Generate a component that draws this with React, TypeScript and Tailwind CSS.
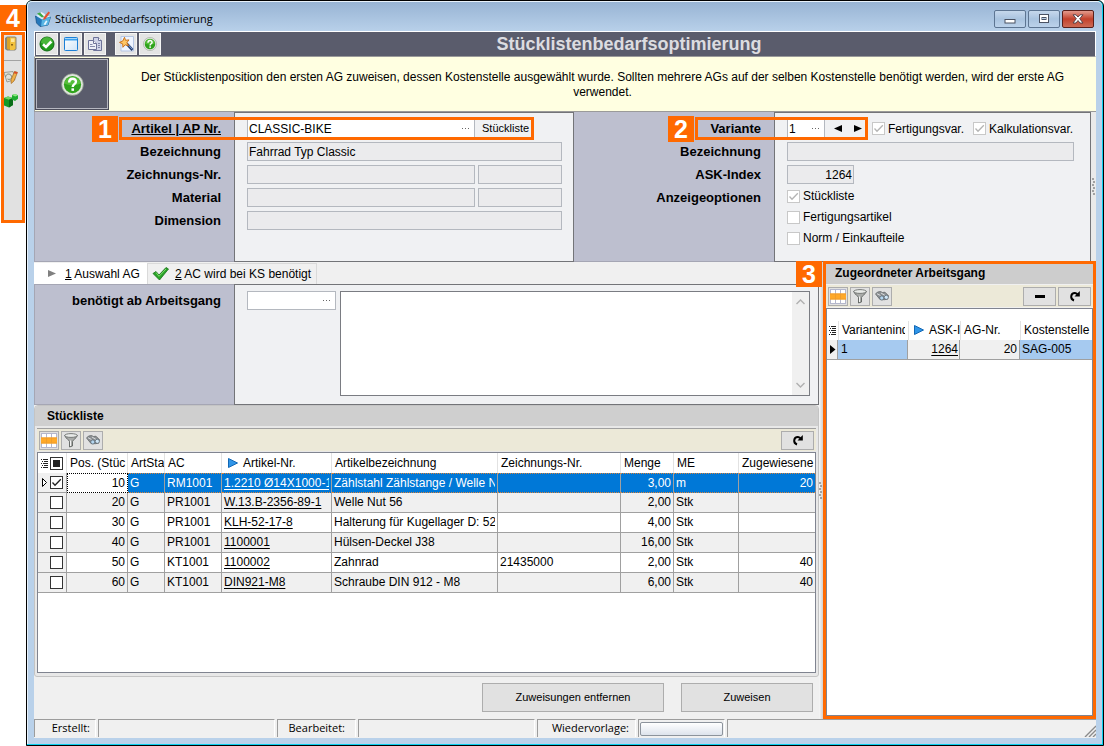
import React from "react";
import clsx from "clsx";

const fieldCls =
  "block h-[19px] min-w-0 border border-[#b4b8bf] bg-[#ebebed] px-px text-[12px] leading-[17px] text-black outline-none";

function Badge({ n, className }: { n: number; className: string }) {
  return (
    <span
      className={clsx(
        "absolute z-20 flex h-[26px] w-[26px] items-center justify-center bg-[#ff6900] text-[25px] leading-none font-bold text-white",
        className,
      )}
    >
      {n}
    </span>
  );
}

function Frame({ className }: { className: string }) {
  return <span className={clsx("pointer-events-none absolute z-10 border-3 border-[#ff6900]", className)} />;
}

function CheckBox({
  label,
  checked,
  dark,
  mixed,
  hideLabel,
}: {
  label: string;
  checked?: boolean;
  dark?: boolean;
  mixed?: boolean;
  hideLabel?: boolean;
}) {
  return (
    <label className="flex items-center gap-[3px] whitespace-nowrap">
      <span className="relative block h-[13px] w-[13px] shrink-0">
        <input
          type="checkbox"
          defaultChecked={checked}
          aria-label={hideLabel ? label : undefined}
          className={clsx(
            "block h-[13px] w-[13px] appearance-none border bg-white",
            dark ? "border-[#333]" : "border-[#c8c8c8]",
          )}
        />
        {checked && (
          <svg viewBox="0 0 13 13" className="pointer-events-none absolute inset-0 h-[13px] w-[13px]">
            <path d="M2.5 6.5 5 9.2 10.8 3.2" fill="none" stroke={dark ? "#222" : "#b4b4b4"} strokeWidth="1.3" />
          </svg>
        )}
        {mixed && <span className="pointer-events-none absolute inset-[3px] bg-[#222]" />}
      </span>
      {!hideLabel && <span>{label}</span>}
    </label>
  );
}

function HelpIcon({ size }: { size: number }) {
  return (
    <svg width={size} height={size} viewBox="0 0 24 24">
      <circle cx="12" cy="12" r="11.3" fill="#dfe5dc" stroke="#8c968a" strokeWidth="0.8" />
      <circle cx="12" cy="12" r="9" fill="#2fa31c" />
      <path d="M3.6 11a8.5 8.5 0 0 1 16.8 0c-5 2.500-11.800 2.500-16.800 0z" fill="#6fd04e" opacity="0.6" />
      <path d="M8.500 10c0-5.400 7.300-5 7.100-.8-.1 2.500-3.400 2.400-3.400 5.300" fill="none" stroke="#fff" strokeWidth="2.500" />
      <rect x="10.900" y="16" width="2.700" height="2.600" fill="#fff" />
    </svg>
  );
}

function OkIcon() {
  return (
    <svg width="16" height="16" viewBox="0 0 16 16">
      <circle cx="8" cy="8" r="7" fill="#1f9a1b" stroke="#0f6b12" />
      <path d="M2 7a6 6 0 0 1 12 0c-4 1.500-8 1.500-12 0z" fill="#63c94f" opacity="0.6" />
      <path d="M4 8.200 7 11l5.300-5.500" fill="none" stroke="#fff" strokeWidth="2.600" />
    </svg>
  );
}

function WindowIcon() {
  return (
    <svg width="16" height="16" viewBox="0 0 16 16">
      <defs>
        <linearGradient id="winFill" x1="0" y1="0" x2="1" y2="1">
          <stop offset="0" stopColor="#fff" />
          <stop offset="1" stopColor="#cfe4f8" />
        </linearGradient>
      </defs>
      <rect x="1.500" y="1.500" width="13" height="13" rx="0.800" fill="url(#winFill)" stroke="#1c7fd6" />
      <path d="M2 3.500h12" stroke="#3aa0ee" strokeWidth="2" />
      <path d="M2 2.500h12" stroke="#a5d8fb" />
    </svg>
  );
}

function CopyIcon() {
  return (
    <svg width="16" height="16" viewBox="0 0 16 16" fill="#cfd3e8" stroke="#6d7299">
      <path d="M6.500 1.500h5l3 3v10h-8z" />
      <path d="M11.500 1.500v3h3" fill="#fff" />
      <path d="M1.500 4.500h5l3 3v6h-8z" fill="#eef0f8" />
      <path d="M6.500 4.500v3h3" fill="#fff" />
      <path d="M3 8.500h2.500M3 10.500h5M11 7.500h2M11 9.500h2M11 11.500h2" strokeWidth="0.800" />
    </svg>
  );
}

function WandIcon() {
  return (
    <svg width="16" height="16" viewBox="0 0 16 16">
      <path d="M3 .5h12.500V15H3z" fill="#eef4ff" stroke="#b5c6e4" />
      <path d="m8.500 7.500 6 6.500" stroke="#28406f" strokeWidth="2.600" />
      <path d="m10 8.600 4.300 4.600" stroke="#7fa2dc" />
      <path d="m6.500 1.300 1 3 3.500-.4-2.100 2.700 1.600 3.100-3.300-.9-2.300 2.500-.2-3.400L1.500 6.400l3.200-1.300z" fill="#ffc766" stroke="#c66a10" strokeWidth="0.900" />
    </svg>
  );
}

function AppIcon() {
  return (
    <svg width="16" height="16" viewBox="0 0 16 16">
      <path d="M.500 5 10 3.500 15.500 6l-2.500 8-8 1.500L1.500 12z" fill="#2578bb" stroke="#124b80" strokeWidth="0.700" />
      <path d="m.5 4.500 8-2 7 3-8.500 3z" fill="#d5edf8" />
      <path d="M7 8.500 15.500 6l-2.500 8-7 1.300z" fill="#57b4e4" />
      <path d="m2 2.500 3-1 4 4-2 1z" fill="#3faa45" />
      <path d="m13.500.500 1.500 1.300L10.500 8l-2.300 1 .4-2.500z" fill="#e4512e" />
      <path d="m6.500 1 3.500 2.500-1 1.300L5.500 2z" fill="#f0f4f8" />
      <path d="M8.500 13.500 11 9.500l1.500.5-2 4z" fill="#e8f6ff" />
    </svg>
  );
}

function GridIcon() {
  return (
    <svg width="16" height="15" viewBox="0 0 16 15">
      <rect width="16" height="15" fill="#fff" />
      <path d="M0 .5h16M0 14.500h16M.5 0v15M5.500 0v15M10.500 0v15M15.500 0v15" stroke="#b4b7cc" />
      <rect y="4.500" width="16" height="6" fill="#ffa928" />
      <path d="M0 5h16M0 10h16M5.500 5v5M10.500 5v5" stroke="#ef9d2c" />
    </svg>
  );
}

function FunnelIcon() {
  return (
    <svg width="14" height="15" viewBox="0 0 14 15">
      <path d="M.7 2.500C2 6 5.300 7 5.500 8.500V14l3-1V8.500C9 6.500 12.500 5.500 13.300 2.500z" fill="#a9aba9" stroke="#5f6361" strokeWidth="0.900" />
      <ellipse cx="7" cy="2.500" rx="6.300" ry="1.900" fill="#e8eae8" stroke="#6d706e" strokeWidth="0.900" />
      <path d="M6.500 7.500v5.500" stroke="#f3f3f3" />
    </svg>
  );
}

function BinocularsIcon() {
  return (
    <svg width="14" height="12" viewBox="0 0 14 12">
      <path d="M.5 4 2.500 2l3-.5 2 1 2.500-.3 3.500 3.500-1 3.500-3 .5L5 9.500z" fill="#8d9194" stroke="#5a5e60" strokeWidth="0.700" />
      <path d="m2 3.700 3.500 1.800M6 3l4 2.500" stroke="#dadddf" />
      <circle cx="6.800" cy="8" r="2.100" fill="#b4d6f0" stroke="#55606a" strokeWidth="0.700" />
      <circle cx="11.300" cy="7.300" r="2.100" fill="#cfe6f7" stroke="#55606a" strokeWidth="0.700" />
    </svg>
  );
}

function RefreshIcon() {
  return (
    <svg width="12" height="12" viewBox="0 0 12 12">
      <path d="M5 10.500C.8 9 1.500 2.800 6 2.900c1.300.1 2.200.7 2.900 1.800" fill="none" stroke="#000" strokeWidth="2" />
      <path d="M10.800 1v5.500H5.500z" fill="#000" />
    </svg>
  );
}

function BlueArrow() {
  return (
    <svg width="10" height="10" viewBox="0 0 10 10" className="shrink-0">
      <path d="M.5.5 9.500 5 .5 9.500z" fill="#2f95e8" stroke="#1267b4" />
    </svg>
  );
}

function ListGlyph() {
  return (
    <svg width="7" height="9" viewBox="0 0 7 9" className="shrink-0">
      <path d="M0 .5h1M2 .5h5M1 2.500h1M3 2.500h4M0 4.500h1M2 4.500h5M1 6.500h1M3 6.500h4M0 8.500h1M2 8.500h5" stroke="#222" />
    </svg>
  );
}

function Grip() {
  return (
    <svg width="4" height="18" viewBox="0 0 4 18" className="shrink-0">
      <path d="M0 1h2M1 4h2M0 7h2M1 10h2M0 13h2M1 16h2" stroke="#8a8a8a" strokeWidth="1.500" />
    </svg>
  );
}

function ToolButton({ label, children }: { label: string; children: React.ReactNode }) {
  return (
    <button
      type="button"
      aria-label={label}
      className="flex h-[22px] w-[22px] items-center justify-center border border-[#f5f5f5] bg-[#e4e4e4]"
    >
      {children}
    </button>
  );
}

function SmallButton({ label, wide, children }: { label: string; wide?: boolean; children: React.ReactNode }) {
  return (
    <button
      type="button"
      aria-label={label}
      className={clsx(
        "flex h-[19px] items-center justify-center border border-[#adadad] bg-[#e1e1e1]",
        wide ? "w-[33px]" : "w-[20px]",
      )}
    >
      {children}
    </button>
  );
}

function GridTools({ minus }: { minus?: boolean }) {
  return (
    <div className="flex h-[22px] items-center gap-[2px] bg-[#ece9d8] px-[2px]">
      <SmallButton label="Spalten">
        <GridIcon />
      </SmallButton>
      <SmallButton label="Filter">
        <FunnelIcon />
      </SmallButton>
      <SmallButton label="Suchen">
        <BinocularsIcon />
      </SmallButton>
      <span className="flex-1" />
      {minus && (
        <SmallButton label="Entfernen" wide>
          <span className="h-[3px] w-[10px] bg-black" />
        </SmallButton>
      )}
      <SmallButton label="Aktualisieren" wide>
        <RefreshIcon />
      </SmallButton>
    </div>
  );
}

function Combo({ id, value, className }: { id: string; value: string; className: string }) {
  return (
    <span className={clsx("flex h-[19px] items-center border border-[#b4b8bf] bg-white", className)}>
      <input id={id} defaultValue={value} className="h-[17px] w-0 min-w-0 flex-1 bg-transparent px-px text-[12px] outline-none" />
      <button type="button" aria-label="Auswählen" className="flex h-full w-[17px] items-center justify-center">
        <svg width="8" height="2" viewBox="0 0 8 2">
          <path d="M0 .5h1M3 .5h1M6 .5h1" stroke="#666" />
        </svg>
      </button>
    </span>
  );
}

function FormLabel({ htmlFor, underline, children }: { htmlFor: string; underline?: boolean; children: React.ReactNode }) {
  return (
    <label htmlFor={htmlFor} className={clsx("h-[19px] text-[13px] leading-[19px] font-bold", underline && "underline")}>
      {children}
    </label>
  );
}

function TitleBar() {
  const btn =
    "flex h-[18px] w-[32px] items-center justify-center rounded-[2px] border border-[#5d7592] bg-linear-to-b from-[#c6d8ec] via-[#a9c3df] to-[#bcd2ea]";
  return (
    <div className="flex h-[29px] items-center gap-[4px] pt-[5px] pl-px">
      <AppIcon />
      <span className="flex-1 font-['Open_Sans','Noto_Sans',sans-serif] text-[11px]">Stücklistenbedarfsoptimierung</span>
      <div className="flex gap-[2px] pr-[2px]">
        <button type="button" aria-label="Minimieren" className={btn}>
          <svg width="12" height="10" viewBox="0 0 12 10">
            <rect x="1" y="5.500" width="10" height="3.500" fill="#fff" stroke="#4a5263" />
          </svg>
        </button>
        <button type="button" aria-label="Maximieren" className={btn}>
          <svg width="12" height="10" viewBox="0 0 12 10">
            <rect x="1.500" y=".5" width="9" height="8" fill="#fff" stroke="#4a5263" />
            <rect x="4" y="3.500" width="4" height="2" fill="#b8cde4" stroke="#4a5263" />
          </svg>
        </button>
        <button
          type="button"
          aria-label="Schließen"
          className="flex h-[18px] w-[32px] items-center justify-center rounded-[2px] border border-[#5a1f1a] bg-linear-to-b from-[#e39a8d] via-[#c2402b] to-[#cd6a55]"
        >
          <svg width="12" height="10" viewBox="0 0 12 10">
            <path d="M1 .8h3L6 3 8 .8h3L7.700 4.700 11 9H8L6 6.500 4 9H1l3.300-4.300z" fill="#fff" stroke="#4a3a44" strokeWidth="0.900" />
          </svg>
        </button>
      </div>
    </div>
  );
}

function SideTools() {
  return (
    <aside className="relative w-[26px] shrink-0 pt-[32px] pl-px">
      <Badge n={4} className="top-[5px] left-0" />
      <div className="flex h-[191px] w-[24px] flex-col items-start border-3 border-[#ff6900] bg-[#e1e1e1]">
        <button type="button" aria-label="Ablage" className="mt-px block h-[16px]">
          <svg width="14" height="16" viewBox="0 0 14 16">
            <path d="m1 2 2-1.500h8l1.500 1V13L11 14.500H3L1 13z" fill="#8a8372" />
            <path d="M3 1.500h4v12H4l-1-1z" fill="#d9a328" />
            <path d="M6 1.500h5.500v11L10 14H6z" fill="#f3c23c" />
            <path d="M7 2.500h3.500v3.500H7z" fill="#ffe79a" />
            <path d="M7 8h2v1.500H7z" fill="#8a6414" />
          </svg>
        </button>
        <span className="mt-[8px] h-px w-[17px] bg-[#a3a3a3]" />
        <button type="button" aria-label="Bearbeiten" className="mt-[8px] block h-[16px]">
          <svg width="15" height="16" viewBox="0 0 15 16">
            <path d="M0 3.500 9 2.500l2 8L3 13z" fill="#dfe0da" stroke="#8b8b84" strokeWidth="0.800" />
            <path d="M1.500 8C2 4.500 6 4 7.500 7S5 11 3.500 10" fill="none" stroke="#7f8c7c" />
            <path d="m10.500 2.500 3 .8L10 12l-2.800 2.500-.2-3.700z" fill="#f0b24a" stroke="#a3651c" strokeWidth="0.700" />
            <path d="m10.500 2.500 3 .8-.7 1.800-3-.8z" fill="#d84a2b" />
          </svg>
        </button>
        <button type="button" aria-label="Artikel" className="mt-[8px] block h-[16px]">
          <svg width="15" height="16" viewBox="0 0 15 16">
            <path d="m0 5 4-1.500L9 5v7l-4 2.500-5-2z" fill="#169a26" />
            <path d="m0 5 4-1.500L9 5 5 6.700z" fill="#6ed565" />
            <path d="M5 6.700 9 5v7l-4 2.500z" fill="#0a6d17" />
            <path d="m8 2 3-1 3 1.200v3.500L11 8 8 6.500z" fill="#1fae30" />
            <path d="m8 2 3-1 3 1.200-2.800 1.200z" fill="#90ea83" />
          </svg>
        </button>
      </div>
    </aside>
  );
}

function ArticleForm() {
  return (
    <section className="grid h-[150px] grid-cols-[200px_minmax(0,340fr)_200px_minmax(0,317fr)_5px] bg-[#bdbfcf] text-[12px]">
      <div className="flex flex-col items-end gap-[4px] border-b border-l border-[#a5a6b4] pt-[7px] pr-[13px]">
        <FormLabel htmlFor="artikel" underline>
          Artikel | AP Nr.
        </FormLabel>
        <FormLabel htmlFor="bez">Bezeichnung</FormLabel>
        <FormLabel htmlFor="znr">Zeichnungs-Nr.</FormLabel>
        <FormLabel htmlFor="material">Material</FormLabel>
        <FormLabel htmlFor="dim">Dimension</FormLabel>
      </div>
      <div className="relative border border-[#737478] bg-[#f0f1f3] pt-[6px] pr-[11px] pl-[12px]">
        <Badge n={1} className="top-[3px] left-[-143px]" />
        <Frame className="top-[4px] right-[39px] left-[-116px] h-[23px]" />
        <div className="grid grid-cols-[minmax(0,228fr)_minmax(0,84fr)] gap-x-[3px] gap-y-[4px]">
          <Combo id="artikel" value="CLASSIC-BIKE" className="w-full" />
          <button type="button" className="h-[19px] pl-[4px] text-left text-[11px]">
            Stückliste
          </button>
          <input id="bez" readOnly value="Fahrrad Typ Classic" className={clsx(fieldCls, "col-span-2")} />
          <input id="znr" readOnly className={fieldCls} />
          <input aria-label="Zeichnungs-Nr. Zusatz" readOnly className={fieldCls} />
          <input id="material" readOnly className={fieldCls} />
          <input aria-label="Material Zusatz" readOnly className={fieldCls} />
          <input id="dim" readOnly className={clsx(fieldCls, "col-span-2")} />
        </div>
      </div>
      <div className="flex flex-col items-end gap-[4px] border-b border-[#a5a6b4] pt-[7px] pr-[13px]">
        <FormLabel htmlFor="variante">Variante</FormLabel>
        <FormLabel htmlFor="vbez">Bezeichnung</FormLabel>
        <FormLabel htmlFor="ask">ASK-Index</FormLabel>
        <span className="text-[13px] leading-[19px] font-bold">Anzeigeoptionen</span>
      </div>
      <div className="relative border border-[#737478] bg-[#f0f1f3] pt-[6px] pl-[12px]">
        <Badge n={2} className="top-[3px] left-[-107px]" />
        <Frame className="top-[4px] left-[-80px] h-[23px] w-[173px]" />
        <div className="flex flex-col gap-[4px]">
          <div className="flex items-center">
            <Combo id="variante" value="1" className="w-[38px] shrink-0" />
            <button type="button" aria-label="Zurück" className="flex h-[19px] w-[26px] items-center justify-center">
              <svg width="8" height="7" viewBox="0 0 8 7">
                <path d="M8 0v7L0 3.500z" />
              </svg>
            </button>
            <button type="button" aria-label="Weiter" className="mr-[8px] flex h-[19px] w-[13px] items-center justify-center">
              <svg width="8" height="7" viewBox="0 0 8 7">
                <path d="M0 0v7l8-3.500z" />
              </svg>
            </button>
            <div className="flex gap-[9px]">
              <CheckBox label="Fertigungsvar." checked />
              <CheckBox label="Kalkulationsvar." checked />
            </div>
          </div>
          <input id="vbez" readOnly className={clsx(fieldCls, "mr-[16px]")} />
          <input id="ask" readOnly value="1264" className={clsx(fieldCls, "w-[67px] text-right")} />
          <div className="flex flex-col gap-[7px] pt-px leading-[14px]">
            <CheckBox label="Stückliste" checked />
            <CheckBox label="Fertigungsartikel" />
            <CheckBox label="Norm / Einkaufteile" />
          </div>
        </div>
      </div>
      <div className="flex items-center justify-center bg-[#eaeaea]">
        <Grip />
      </div>
    </section>
  );
}

function Tabs() {
  return (
    <div role="tablist" className="flex h-[22px] items-end bg-[#f0f0f0] text-[12px]">
      <button role="tab" aria-selected="true" type="button" className="flex h-[21px] w-[113px] items-center bg-white pl-[14px]">
        <svg width="8" height="7" viewBox="0 0 8 7">
          <path d="M0 0v7l8-3.500z" fill="#808080" />
        </svg>
        <span className="pl-[9px]">
          <u>1</u> Auswahl AG
        </span>
      </button>
      <button role="tab" aria-selected="false" type="button" className="flex h-[21px] w-[170px] items-center border border-b-0 border-[#dadada] pl-[4px]">
        <svg width="17" height="14" viewBox="0 0 17 14">
          <path d="M1 6.500 4 4.500 7 8l7-7.500L16.500 2 7.500 13z" fill="#28a428" stroke="#167016" strokeWidth="0.800" />
          <path d="m4 5.500 3 3.800L14 2" fill="none" stroke="#7fdc6b" />
        </svg>
        <span className="pl-[6px] whitespace-nowrap">
          <u>2</u> AC wird bei KS benötigt
        </span>
      </button>
    </div>
  );
}

function OperationForm() {
  return (
    <section className="grid h-[121px] shrink-0 grid-cols-[200px_minmax(0,1fr)] bg-[#bdbfcf]">
      <div className="flex flex-col items-end border border-r-0 border-[#a5a6b4] pt-[6px] pr-[13px]">
        <FormLabel htmlFor="abag">benötigt ab Arbeitsgang</FormLabel>
      </div>
      <div className="flex gap-[4px] border border-[#737478] bg-[#f0f1f3] pt-[6px] pr-[8px] pb-[8px] pl-[12px]">
        <Combo id="abag" value="" className="w-[89px] shrink-0" />
        <div className="flex flex-1 border border-[#7a7c82] bg-white">
          <textarea aria-label="Beschreibung" className="min-w-0 flex-1 resize-none text-[12px] outline-none" />
          <div className="flex w-[17px] flex-col items-center justify-between bg-[#f0f0f0] py-[7px]">
            <svg width="9" height="6" viewBox="0 0 9 6">
              <path d="m.5 5 4-4 4 4" fill="none" stroke="#b0b0b0" strokeWidth="1.400" />
            </svg>
            <svg width="9" height="6" viewBox="0 0 9 6">
              <path d="m.5 1 4 4 4-4" fill="none" stroke="#b0b0b0" strokeWidth="1.400" />
            </svg>
          </div>
        </div>
      </div>
    </section>
  );
}

const rows = [
  ["10", "G", "RM1001", "1.2210 Ø14X1000-1", "Zählstahl Zählstange / Welle N", "", "3,00", "m", "20"],
  ["20", "G", "PR1001", "W.13.B-2356-89-1", "Welle Nut 56", "", "2,00", "Stk", ""],
  ["30", "G", "PR1001", "KLH-52-17-8", "Halterung für Kugellager D: 52", "", "4,00", "Stk", ""],
  ["40", "G", "PR1001", "1100001", "Hülsen-Deckel J38", "", "16,00", "Stk", ""],
  ["50", "G", "KT1001", "1100002", "Zahnrad", "21435000", "2,00", "Stk", "40"],
  ["60", "G", "KT1001", "DIN921-M8", "Schraube DIN 912 - M8", "", "6,00", "Stk", "40"],
];

const heads = ["Pos. (Stüc", "ArtSta", "AC", "Artikel-Nr.", "Artikelbezeichnung", "Zeichnungs-Nr.", "Menge", "ME", "Zugewiesene"];

function PartsTable() {
  return (
    <table className="w-full table-fixed border-separate border-spacing-0 text-[12px] leading-[19px]">
      <colgroup>
        <col className="w-[29px]" />
        <col className="w-[61px]" />
        <col className="w-[37px]" />
        <col className="w-[57px]" />
        <col className="w-[110px]" />
        <col className="w-[166px]" />
        <col className="w-[123px]" />
        <col className="w-[53px]" />
        <col className="w-[65px]" />
        <col />
      </colgroup>
      <thead>
        <tr className="h-[20px]">
          <th className="border-r border-[#e2e2e2] p-0">
            <div className="flex items-center gap-[2px] pl-[3px]">
              <ListGlyph />
              <CheckBox label="Alle auswählen" dark mixed hideLabel />
            </div>
          </th>
          {heads.map((h, i) => (
            <th key={h} className={clsx("p-0 text-left font-normal", i < 8 && "border-r border-[#e2e2e2]")}>
              <div className="flex items-center overflow-hidden pl-[3px] whitespace-nowrap">
                {i === 3 && (
                  <span className="pr-[5px] pl-[3px]">
                    <BlueArrow />
                  </span>
                )}
                {h}
              </div>
            </th>
          ))}
        </tr>
      </thead>
      <tbody>
        {rows.map((r, ri) => {
          const sel = ri === 0;
          return (
            <tr key={r[0]} className={clsx("h-[20px]", sel ? "bg-[#0078d7] text-white" : ri % 2 ? "bg-[#f0f0f0]" : "bg-white")}>
              <td className="border-r border-b border-[#a0a0a0] bg-[#f0f0f0] p-0">
                <div className="flex items-center">
                  <span className="flex w-[12px] justify-center">
                    {sel && (
                      <svg width="5" height="9" viewBox="0 0 5 9">
                        <path d="M.5.500 4.500 4.500.5 8.500z" fill="#fff" stroke="#000" />
                      </svg>
                    )}
                  </span>
                  <CheckBox label={"Position " + r[0]} dark checked={sel} hideLabel />
                </div>
              </td>
              {r.map((c, ci) => (
                <td
                  key={ci}
                  className={clsx(
                    "border-b p-0",
                    ci === 8 ? "" : "border-r",
                    "border-[#a0a0a0]",
                    sel && ci > 0 && "border-t border-t-[#d9833a] border-b-[#d9833a] [border-top-style:dotted] [border-bottom-style:dotted]",
                    sel && ci === 0 && "border-dotted border-t border-l border-black bg-white text-black",
                  )}
                >
                  <div
                    className={clsx(
                      "mr-[2px] overflow-hidden pl-[2px] whitespace-nowrap",
                      sel ? "h-[18px] leading-[18px]" : "h-[19px]",
                      (ci === 0 || ci === 6 || ci === 8) && "text-right",
                    )}
                  >
                    {ci === 3 ? (
                      <a href="#artikel" className="underline underline-offset-2">
                        {c}
                      </a>
                    ) : (
                      c
                    )}
                  </div>
                </td>
              ))}
            </tr>
          );
        })}
      </tbody>
    </table>
  );
}

function AssignedPanel() {
  const th = "p-0 pt-[11px] text-left font-normal";
  return (
    <section className="relative mt-[-1px] flex w-[273px] shrink-0 flex-col border-3 border-[#ff6900] bg-[#f0f0f0]">
      <Badge n={3} className="top-[-3px] left-[-30px]" />
      <h2 className="h-[20px] bg-[#cdcdcd] pl-[9px] text-[12px] leading-[18px] font-bold">Zugeordneter Arbeitsgang</h2>
      <div className="mt-px">
        <GridTools minus />
      </div>
      <div className="mt-px flex-1 border border-[#808490] bg-white">
        <table className="w-full table-fixed border-separate border-spacing-0 text-[12px] leading-[19px]">
          <colgroup>
            <col className="w-[11px]" />
            <col className="w-[70px]" />
            <col className="w-[52px]" />
            <col className="w-[60px]" />
            <col />
          </colgroup>
          <thead>
            <tr className="h-[31px]">
              <th className={th}>
                <div className="flex justify-center">
                  <ListGlyph />
                </div>
              </th>
              <th className={th}>
                <div className="mr-[3px] overflow-hidden border-l border-[#e2e2e2] pl-[3px] whitespace-nowrap">Variantenind</div>
              </th>
              <th className={th}>
                <div className="flex items-center gap-[5px] border-l border-[#e2e2e2] pl-[5px] whitespace-nowrap">
                  <BlueArrow />
                  <span>ASK-I</span>
                </div>
              </th>
              <th className={th}>
                <div className="border-l border-[#e2e2e2] pl-[3px]">AG-Nr.</div>
              </th>
              <th className={th}>
                <div className="overflow-hidden border-l border-[#e2e2e2] pl-[3px] whitespace-nowrap">Kostenstelle</div>
              </th>
            </tr>
          </thead>
          <tbody>
            <tr className="h-[20px] bg-[#f0f0f0]">
              <td className="border-r border-b border-[#a0a0a0] p-0">
                <svg width="6" height="9" viewBox="0 0 6 9" className="ml-[3px]">
                  <path d="M0 0v9l5.500-4.500z" />
                </svg>
              </td>
              <td className="border-r border-b border-[#a0a0a0] bg-[#a6caf0] p-0 pl-[3px]">1</td>
              <td className="border-r border-b border-[#a0a0a0] p-0 pr-px text-right">
                <a href="#ask" className="underline underline-offset-2">
                  1264
                </a>
              </td>
              <td className="border-r border-b border-[#a0a0a0] p-0 pr-[2px] text-right">20</td>
              <td className="border-b border-[#a0a0a0] bg-[#a6caf0] p-0 pl-[2px]">SAG-005</td>
            </tr>
          </tbody>
        </table>
      </div>
    </section>
  );
}

function StatusBar() {
  const cell = "flex h-[18px] items-center border-t border-l border-[#9c9c9c]";
  const label = "justify-end font-['Open_Sans','Noto_Sans',sans-serif] text-[11px]";
  return (
    <footer className="flex h-[19px] shrink-0 items-start gap-[2px] bg-[#f0f0f0]">
      <div className={clsx(cell, label, "w-[62px] border-r border-r-white pr-[5px]")}>Erstellt:</div>
      <div className={clsx(cell, "w-[177px] border-r border-r-white")} />
      <div className={clsx(cell, label, "w-[79px] border-r border-r-white pr-[10px]")}>Bearbeitet:</div>
      <div className={clsx(cell, "w-[177px] border-r border-r-white")} />
      <div className={clsx(cell, label, "w-[99px] border-r border-r-white pr-[6px]")}>Wiedervorlage:</div>
      <div className={clsx(cell, "w-[87px] border-r border-r-white pl-px")}>
        <button
          type="button"
          aria-label="Wiedervorlage"
          className="h-[14px] w-[83px] rounded-[2px] border border-[#8c939c] bg-linear-to-b from-white to-[#dde3ec]"
        />
      </div>
      <div className={clsx(cell, "flex-1 items-end justify-end")}>
        <svg width="12" height="12" viewBox="0 0 12 12">
          <path d="M1 12 12 1M5 12l7-7M9 12l3-3" stroke="#8a8a8a" strokeWidth="1.400" />
        </svg>
      </div>
    </footer>
  );
}

export default function App() {
  return (
    <div className="flex min-h-screen bg-white font-['Liberation_Sans',Arial,sans-serif] text-black">
      <SideTools />
      <div className="flex min-w-0 flex-1 flex-col rounded-t-[6px] border border-black bg-[#0ad0ee]">
        <div className="mr-px mb-px flex flex-1 flex-col rounded-t-[5px] border-t border-l border-[#e8f2fb] bg-[#b9d1ea] bg-linear-to-b from-[#98b4d4] to-[#b9d1ea] to-[30px] px-[6px] pb-[6px]">
          <TitleBar />
          <main className="flex flex-1 flex-col bg-[#f0f0f0]">
            <header className="flex h-[26px] shrink-0 items-center gap-[2px] border-t border-r border-b border-l border-white border-b-[#9a9a9a] bg-[#5a5c6c] pl-px">
              <ToolButton label="OK">
                <OkIcon />
              </ToolButton>
              <ToolButton label="Fenster">
                <WindowIcon />
              </ToolButton>
              <ToolButton label="Kopieren">
                <CopyIcon />
              </ToolButton>
              <span className="w-[5px]" />
              <ToolButton label="Assistent">
                <WandIcon />
              </ToolButton>
              <ToolButton label="Hilfe">
                <HelpIcon size={14} />
              </ToolButton>
              <h1 className="flex-1 text-center text-[18px] leading-none font-bold text-[#dcdce0]">Stücklistenbedarfsoptimierung</h1>
            </header>
            <div className="flex h-[55px] shrink-0 border-b border-l border-[#9a9a9a] bg-[#ffffe1]">
              <div className="mt-px mb-px flex w-[74px] shrink-0 items-center justify-center border border-[#4b4c5a] bg-[#5a5c6c] shadow-[inset_0_0_0_1px_#b6b7c0]">
                <HelpIcon size={23} />
              </div>
              <p className="flex-1 px-[12px] pt-[13px] text-center text-[12px] leading-[15px]">
                Der Stücklistenposition den ersten AG zuweisen, dessen Kostenstelle ausgewählt wurde. Sollten mehrere AGs auf der selben
                Kostenstelle benötigt werden, wird der erste AG verwendet.
              </p>
            </div>
            <ArticleForm />
            <div className="flex flex-1">
              <div className="flex min-w-0 flex-1 flex-col">
                <Tabs />
                <OperationForm />
                <section className="flex flex-1 flex-col rounded-t-[4px] rounded-b-[3px] border border-[#c4c4c4] bg-[#e8e8e8] px-[2px] pb-[3px]">
                  <h2 className="mx-[-2px] h-[20px] shrink-0 rounded-t-[3px] bg-[#cfcfcf] pl-[12px] text-[12px] leading-[20px] font-bold">
                    Stückliste
                  </h2>
                  <div className="mt-[2px] border-t border-[#a0a0a0]">
                    <GridTools />
                  </div>
                  <div className="mt-px flex-1 border border-[#808490] bg-white">
                    <PartsTable />
                  </div>
                </section>
                <div className="flex h-[42px] shrink-0 justify-end gap-[17px] pt-[6px] pr-[6px]">
                  <button type="button" className="h-[29px] w-[182px] border border-[#adadad] bg-[#e1e1e1] text-[11px]">
                    Zuweisungen entfernen
                  </button>
                  <button type="button" className="h-[29px] w-[132px] border border-[#adadad] bg-[#e1e1e1] text-[11px]">
                    Zuweisen
                  </button>
                </div>
              </div>
              <div className="flex w-[4px] shrink-0 items-center justify-center bg-linear-to-r from-[#f8f8f8] to-[#d0d0d0]">
                <Grip />
              </div>
              <AssignedPanel />
            </div>
            <StatusBar />
          </main>
        </div>
      </div>
    </div>
  );
}
